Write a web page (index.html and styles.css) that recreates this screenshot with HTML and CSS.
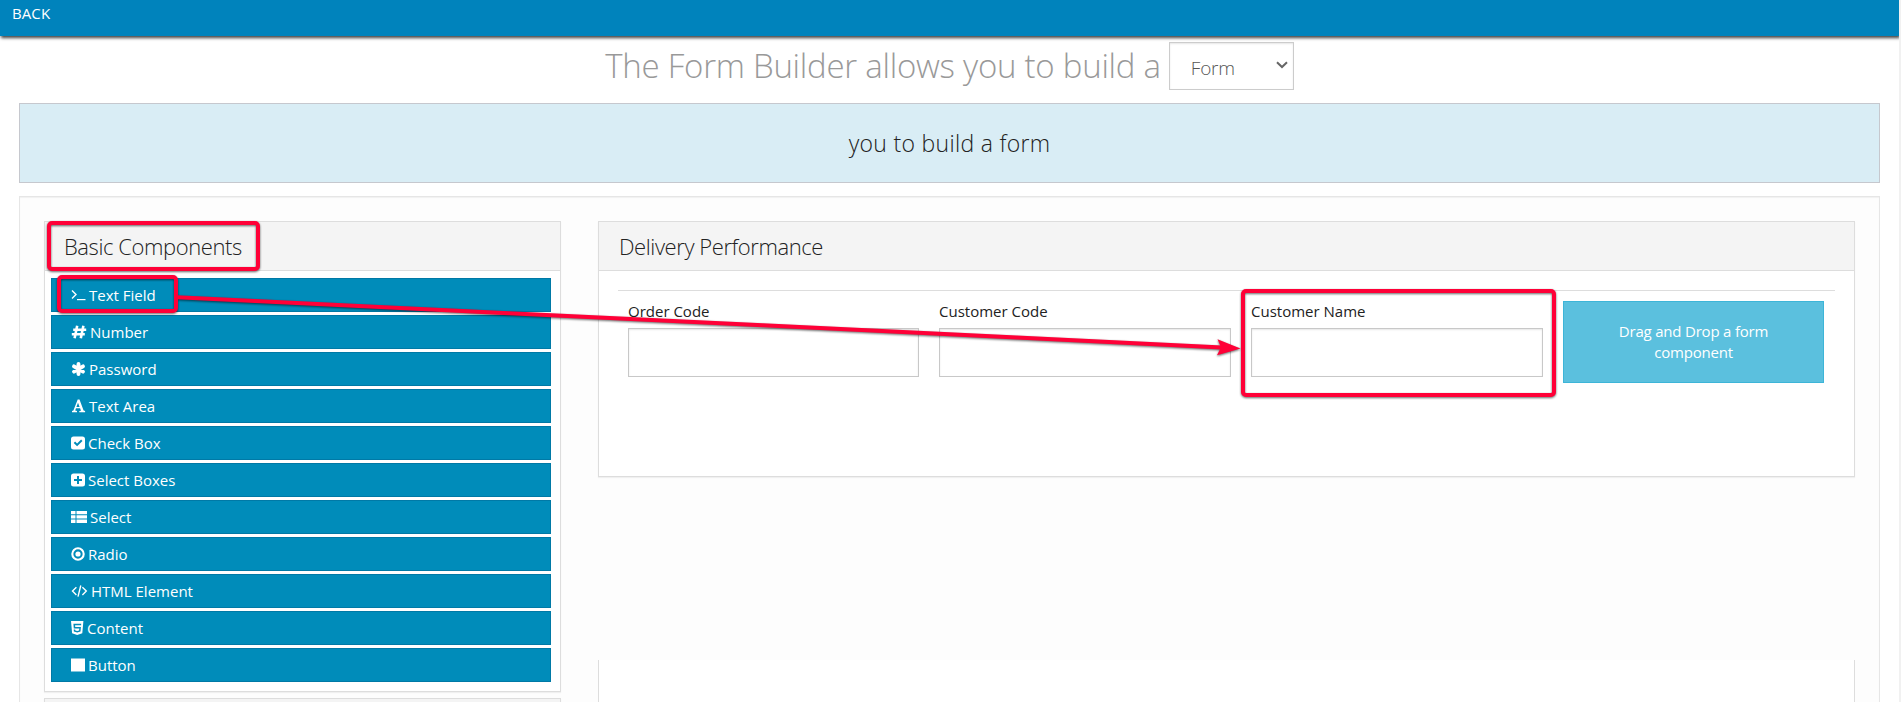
FILE: index.html
```html
<!DOCTYPE html>
<html lang="en">
<head>
<meta charset="utf-8">
<title>Form Builder</title>
<link rel="stylesheet" href="styles.css">
</head>
<body>
<div class="page">
  <header class="topbar"><a class="back">BACK</a></header>
  <h1 class="title"><span class="title-text">The Form Builder allows you to build a</span>
    <span class="type-select"><span>Form</span><svg class="chevron" viewBox="0 0 12 8"><path d="M1 1.2 6 6 11 1.2" fill="none" stroke="#666" stroke-width="2"/></svg></span>
  </h1>
  <div class="alert"><span>you to build a form</span></div>
  <main class="well">
    <aside class="sidebar">
      <section class="panel">
        <h2 class="panel-heading">Basic Components</h2>
        <div class="component-list">
          <a class="component"><svg class="ico w15" viewBox="0 0 15 14"><path d="M1 2.6 5 6.6 1 10.6" fill="none" stroke="#fff" stroke-width="1.4"/><path d="M6 11h8.5v1.2H6z"/></svg><span>Text Field</span></a>
          <a class="component"><svg class="ico w16" viewBox="0 0 16 14"><path d="M6.2 0.8 3.6 13.2M12.4 0.8 9.8 13.2M2.2 4.7h13M0.8 9.2h13" fill="none" stroke="#fff" stroke-width="2.6"/></svg><span>Number</span></a>
          <a class="component"><svg class="ico w15" viewBox="0 0 15 14"><path d="M7.5 2v10M3 4.4l9 5.200M12 4.400l-9 5.200" fill="none" stroke="#fff" stroke-width="3.900" stroke-linecap="round"/></svg><span>Password</span></a>
          <a class="component"><svg class="ico w15" viewBox="0 0 15 14"><path fill-rule="evenodd" d="M6.7.5h1.800l4.100 11 1.500.6v1.100H8.300v-1.100l1.700-.4-.9-2.500H5l-.8 2.400 1.800.5v1.100H1v-1.100l1.400-.6zM7 3.800 5.400 8h3.200z"/></svg><span>Text Area</span></a>
          <a class="component"><svg class="ico w14" viewBox="0 0 14 14"><path fill-rule="evenodd" d="M2.600.5h8.800Q14 .5 14 3v8q0 2.500-2.600 2.500H2.600Q0 13.500 0 11V3Q0 .5 2.600.5zM6.100 10.300 11.500 4.900 10.100 3.500 6.100 7.500 4.100 5.500 2.700 6.900z"/></svg><span>Check Box</span></a>
          <a class="component"><svg class="ico w14" viewBox="0 0 14 14"><path fill-rule="evenodd" d="M2.600.5h8.800Q14 .5 14 3v8q0 2.500-2.600 2.500H2.600Q0 13.500 0 11V3Q0 .5 2.600.5zM6 3v3H3v2h3v3h2V8h3V6H8V3z"/></svg><span>Select Boxes</span></a>
          <a class="component"><svg class="ico w16" viewBox="0 0 16 14"><path d="M0 1h4.500v3.300H0zM5.500 1H16v3.300H5.500zM0 5.300h4.500v3.300H0zM5.500 5.300H16v3.300H5.500zM0 9.600h4.500v3.300H0zM5.500 9.600H16v3.300H5.500z"/></svg><span>Select</span></a>
          <a class="component"><svg class="ico w14" viewBox="0 0 14 14"><circle cx="7" cy="7" r="5.700" fill="none" stroke="#fff" stroke-width="2.100"/><circle cx="7" cy="7" r="2.600"/></svg><span>Radio</span></a>
          <a class="component"><svg class="ico w17" viewBox="0 0 17 14"><path d="M5.400 3.200 1.500 7.100 5.400 11M11.400 3.200 15.300 7.100 11.400 11M9.800 1.500 7 12.700" fill="none" stroke="#fff" stroke-width="1.400"/></svg><span>HTML Element</span></a>
          <a class="component"><svg class="ico w13" viewBox="0 0 13 14"><path fill-rule="evenodd" d="M0 0h12.400l-1.100 12.300L6.200 14l-5.100-1.700zM2.400 2.800l.4 4.600h5.500L8.100 9.400l-1.900.5-1.900-.5-.1-1H2.700l.2 2.200 3.300 1 3.300-1L9.900 6H4.200L4.100 4.300h6l.1-1.500z"/></svg><span>Content</span></a>
          <a class="component"><svg class="ico w14" viewBox="0 0 14 14"><path d="M0 .5h14v13H0z"/></svg><span>Button</span></a>
        </div>
      </section>
      <section class="panel next"><h2 class="panel-heading"></h2></section>
    </aside>
    <div class="canvas">
      <section class="panel form-panel">
        <h2 class="panel-heading">Delivery Performance</h2>
        <div class="form-body">
          <div class="form-row">
            <label class="field"><span>Order Code</span><input type="text"></label>
            <label class="field"><span>Customer Code</span><input type="text"></label>
            <label class="field"><span>Customer Name</span><input type="text"></label>
            <div class="drop-cell"><div class="drop">Drag and Drop a form component</div></div>
          </div>
        </div>
      </section>
      <section class="preview"></section>
    </div>
  </main>
</div>
<svg class="annotations" viewBox="0 0 1901 702">
  <g class="marks">
    <rect x="49" y="223" width="209" height="46" rx="3"/>
    <rect x="59" y="277" width="117" height="34" rx="3"/>
    <rect x="1243" y="291" width="311" height="104" rx="3"/>
    <path d="M177 297.200 1222 347.400"/>
    <path class="head" d="M1240.500 348.500 1217.500 339.300 1221 347.300 1217 355.300z"/>
  </g>
</svg>
</body>
</html>
```
FILE: styles.css
```css
* { box-sizing: border-box; }
body {
  margin: 0;
  height: 702px;
  overflow: hidden;
  background: #f1f1f1;
  font-family: "Open Sans", "Noto Sans", sans-serif;
  font-size: 15px;
  color: #222;
}
.page { width: 1899px; height: 702px; overflow: hidden; background: #fff; }
.topbar {
  height: 36px;
  padding: 3px 0 0 12px;
  background: #0083bc;
  box-shadow: 1px 2px 3px rgba(0, 0, 0, .75);
}
.back { display: block; color: #fff; font-size: 15px; line-height: 21px; letter-spacing: .1px; }
.title {
  display: flex;
  justify-content: center;
  gap: 8px;
  height: 67px;
  margin: 0;
  padding-top: 6px;
  font-weight: 300;
  color: #999;
}
.title-text { font-size: 33px; line-height: 48px; letter-spacing: -.25px; white-space: nowrap; }
.type-select {
  display: flex;
  align-items: center;
  justify-content: space-between;
  width: 125px;
  height: 48px;
  padding: 4px 5px 0 21px;
  border: 1px solid #ccc;
  box-shadow: inset 0 1px 2px rgba(0, 0, 0, .1);
  background: #fff;
  color: #555;
  font-size: 19px;
  letter-spacing: -.2px;
}
.chevron { width: 12px; height: 8px; margin-bottom: 6px; }
.alert {
  display: flex;
  align-items: center;
  justify-content: center;
  height: 80px;
  margin: 0 19px;
  border: 1px solid #c6c8ce;
  background: #d9edf5;
  font-size: 23px;
  font-weight: 300;
  letter-spacing: .3px;
}
.well {
  display: flex;
  gap: 37px;
  height: 540px;
  margin: 13px 19px 0;
  padding: 24px;
  border: 1px solid #e6e6e6;
  background: #fdfdfd;
  box-shadow: inset 0 1px 1px rgba(0, 0, 0, .05);
}
.sidebar { width: 517px; }
.panel { border: 1px solid #ddd; background: #fff; box-shadow: 0 1px 1px rgba(0, 0, 0, .05); }
.next { margin-top: 6px; }
.panel-heading {
  height: 49px;
  margin: 0;
  padding-left: 19px;
  border-bottom: 1px solid #ddd;
  background: #f4f4f4;
  font-size: 22px;
  font-weight: 300;
  line-height: 49px;
  letter-spacing: -.42px;
}
.component-list { display: grid; gap: 3px; padding: 7px 9px 9px 6px; }
.component {
  display: flex;
  align-items: center;
  height: 34px;
  padding-left: 19px;
  border: 1px solid #0079a6;
  background: #008cba;
  color: #fff;
  font-size: 15px;
}
.ico { height: 14px; margin-right: 3px; fill: #fff; }
.w13 { width: 13px; }
.w14 { width: 14px; }
.w15 { width: 15px; }
.w16 { width: 16px; }
.w17 { width: 17px; }
.canvas { width: 1257px; }
.form-panel { height: 256px; }
.form-panel .panel-heading { padding-left: 20px; }
.form-body { margin: 19px 19px 0; border-top: 1px solid #ddd; }
.form-row { display: grid; grid-template-columns: 311px 312px 312px 281px; padding-top: 10px; }
.field { display: block; padding: 0 10px; }
.field span { display: block; height: 27px; line-height: 21px; }
.field input {
  display: block;
  width: 100%;
  height: 49px;
  border: 1px solid #c8c8c8;
  background: #fff;
  box-shadow: inset 0 1px 2px rgba(0, 0, 0, .1);
}
.drop-cell { padding: 0 10px; }
.drop {
  height: 82px;
  padding: 19px 40px;
  border: 1px solid #3db5d8;
  background: #5bc0de;
  color: #fff;
  line-height: 21px;
  letter-spacing: -.2px;
  text-align: center;
}
.preview { height: 60px; margin-top: 183px; border: solid #ddd; border-width: 0 1px; background: #fff; }
/* Callout boxes and arrow over the page */
.annotations { position: absolute; left: 0; top: 0; width: 1901px; height: 702px; pointer-events: none; }
.marks { fill: none; stroke: #ff0037; stroke-width: 4; filter: drop-shadow(0 1px 1px rgba(0, 0, 0, .6)); }
.marks .head { fill: #ff0037; stroke: none; }
```
